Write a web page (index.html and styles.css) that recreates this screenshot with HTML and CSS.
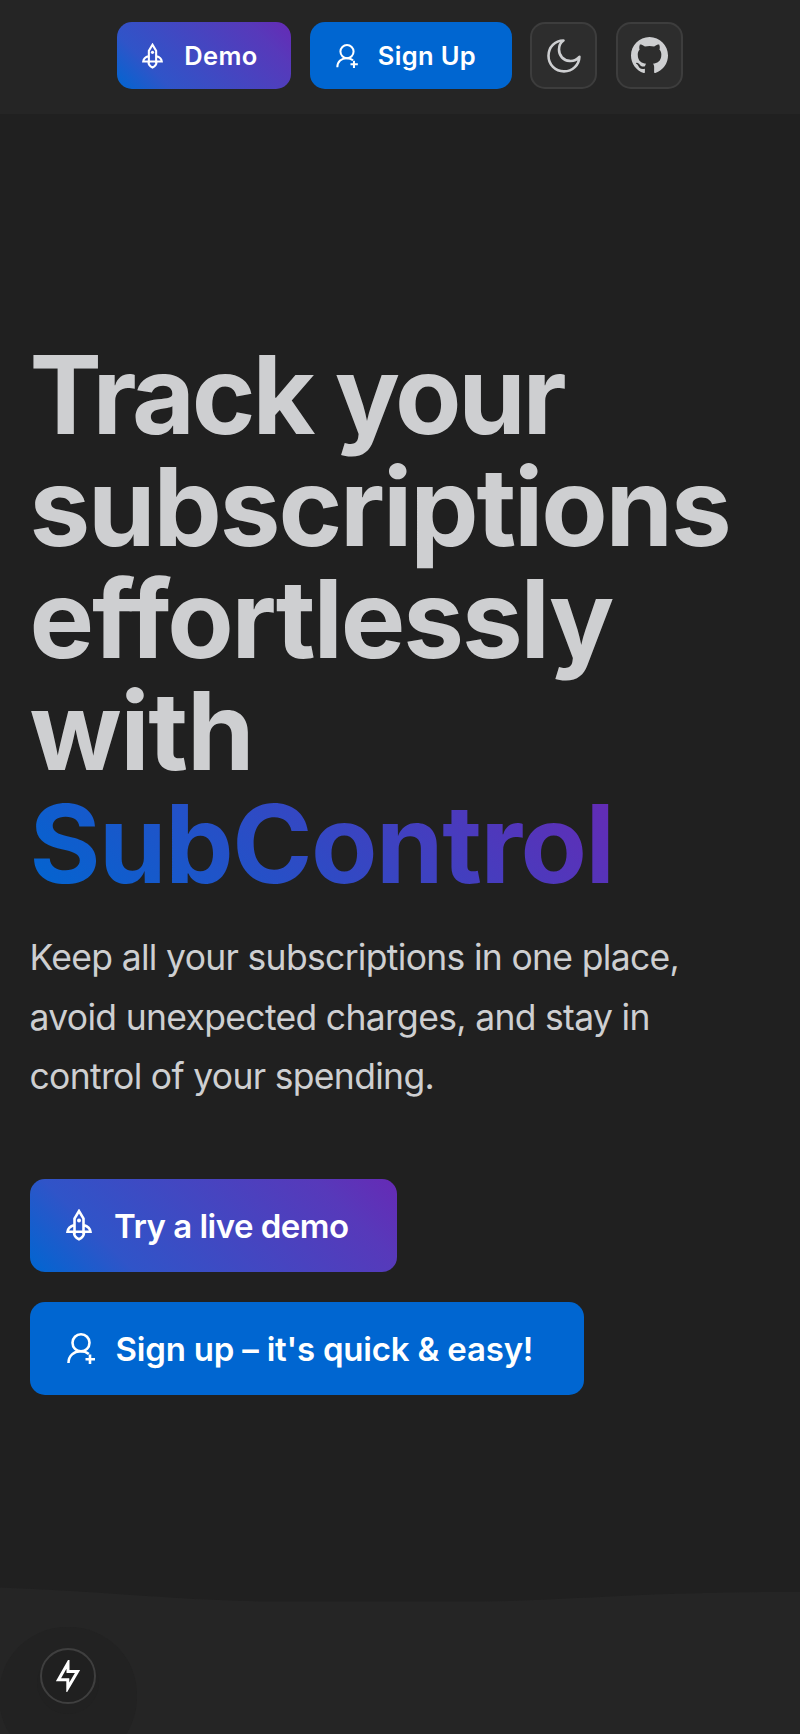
FILE: index.html
```html
<!DOCTYPE html>
<html lang="en">
<head>
<meta charset="utf-8">
<title>SubControl</title>
<link rel="stylesheet" href="styles.css">
</head>
<body>
<svg class="defs" aria-hidden="true">
  <symbol id="rocket" viewBox="0 0 26 32"><path d="M8.500 25V9.500L13 2L17.500 9.500V25M8.500 16Q2 18 1.500 22.800H24.500Q24 18 17.500 16M8 23.500Q8 28 13 30.300Q18 28 18 23.500" /><circle class="dot" cx="13" cy="11.500" r="2"/></symbol>
  <symbol id="user" viewBox="0 0 28 31"><circle cx="14" cy="9.800" r="8.500"/><path d="M1.500 30C1.500 22.500 7 18.300 13.500 18.300Q18.500 18.300 21.800 21M23 21.500V31M18.500 26.300H28"/></symbol>
</svg>
<header class="topbar">
  <a class="btn btn-small gradient demo"><svg class="icon rocket"><use href="#rocket"/></svg><span>Demo</span></a>
  <a class="btn btn-small signup"><svg class="icon user"><use href="#user"/></svg><span>Sign Up</span></a>
  <a class="square"><svg class="moon" viewBox="0 0 34 34"><path d="M16.500 1.500C8 1.500 1.500 8 1.500 16.800C1.500 25.700 8.200 32.400 17 32.400C25.500 32.400 32.200 26 32.400 17.800C29.500 21.200 26 22.200 22.500 21.900C16.500 21.500 12 17 12 10.500C12 6.500 13.500 3.500 16.500 1.500Z"/></svg></a>
  <a class="square"><svg class="github" viewBox="0 0 16 16"><path fill-rule="evenodd" d="M8 0C3.580 0 0 3.580 0 8c0 3.540 2.290 6.530 5.470 7.590.4.070.55-.17.55-.38 0-.19-.01-.82-.01-1.490-2.010.37-2.530-.49-2.690-.94-.09-.23-.48-.94-.82-1.130-.28-.15-.68-.52-.01-.53.63-.01 1.080.58 1.230.82.72 1.210 1.870.87 2.330.66.070-.52.28-.87.51-1.070-1.780-.2-3.640-.89-3.640-3.950 0-.87.31-1.590.82-2.150-.08-.2-.36-1.020.08-2.120 0 0 .67-.21 2.200.82.64-.18 1.320-.27 2-.27s1.360.09 2 .27c1.530-1.040 2.200-.82 2.200-.82.44 1.100.16 1.920.08 2.120.51.56.82 1.270.82 2.150 0 3.070-1.870 3.750-3.650 3.950.29.25.54.73.54 1.480 0 1.070-.01 1.930-.01 2.200 0 .21.15.46.55.38A8.010 8.010 0 0 0 16 8c0-4.420-3.580-8-8-8z"/></svg></a>
</header>
<main class="hero">
  <h1 class="title">
    <span class="line l1">Track your</span>
    <span class="line l2">subscriptions</span>
    <span class="line l3">effortlessly</span>
    <span class="line l4">with</span>
    <span class="line l5 brand">SubControl</span>
  </h1>
  <p class="lead"><span class="line">Keep all your subscriptions in one place,</span><span class="line">avoid unexpected charges, and stay in</span><span class="line">control of your spending.</span></p>
  <div class="actions">
    <a class="btn btn-large gradient try"><svg class="icon rocket"><use href="#rocket"/></svg><span>Try a live demo</span></a>
    <a class="btn btn-large join"><svg class="icon user"><use href="#user"/></svg><span>Sign up – it's quick &amp; easy!</span></a>
  </div>
</main>
<footer class="bottom">
  <svg class="wave" viewBox="0 0 800 147" preserveAspectRatio="none"><path d="M0 .5C100 4 190 14.500 280 14.500H480C570 13.500 650 4.500 800 5V147H0Z"/></svg>
  <a class="fab"><svg class="bolt" viewBox="0 0 24 32"><path d="M12 3L2.500 19.700H11.800V28L21.500 11.500H12Z"/></svg></a>
</footer>
</body>
</html>
```

FILE: styles.css
```css
* { box-sizing: border-box; }
body { margin: 0; height: 1734px; overflow: hidden; display: flex; flex-direction: column; background: #202020; color: #cecfd1; font-family: Inter, "Liberation Sans", sans-serif; }
.defs { position: absolute; width: 0; height: 0; }
.topbar { height: 114px; flex: none; padding-top: 22px; display: flex; justify-content: center; align-items: flex-start; gap: 18.5px; background: #252525; }
.btn { display: flex; align-items: center; flex: none; background: #0066d1; color: #fff; font-weight: 600; white-space: nowrap; border-radius: 15px; }
.gradient { background: linear-gradient(45deg, #0066d1, #3054c8 23%, #5739ba 82%, #662ab5); }
.icon { fill: none; stroke: #fff; stroke-width: 2.600; flex: none; }
.dot { fill: #fff; stroke: none; }
.btn-small { height: 67px; font-size: 25.500px; letter-spacing: .35px; }
.demo { width: 174px; padding-left: 25px; }
.signup { width: 202px; padding-left: 26px; }
.btn-small .rocket { width: 21px; height: 26px; margin-right: 21px; }
.btn-small .user { width: 22px; height: 24px; margin-right: 20px; }
.square { width: 67px; height: 67px; border: 2px solid #3d3d3d; border-radius: 15px; background: #2d2d2d; display: flex; align-items: center; justify-content: center; }
.moon { width: 34px; height: 34px; fill: none; stroke: #cecfd1; stroke-width: 2.600; stroke-linejoin: round; }
.github { width: 37px; height: 37px; fill: #cecfd1; }
.hero { flex: none; height: 1473px; padding: 225px 29.500px 0; }
.title { margin: 0; font-size: 108.500px; line-height: 112px; font-weight: 700; }
.line { display: block; width: max-content; white-space: nowrap; }
.l1 { letter-spacing: -3.200px; }
.l2 { letter-spacing: -2.150px; }
.l3 { letter-spacing: -2.150px; }
.l4 { letter-spacing: -1.400px; }
.l5 { letter-spacing: -1.450px; padding-top: 1px; }
.brand { background: linear-gradient(45deg, #0066d1, #662ab5); background-clip: text; -webkit-background-clip: text; color: transparent; }
.lead { margin: 28px 0 0; font-size: 35.500px; line-height: 59.500px; letter-spacing: -.68px; }
.actions { margin-top: 72px; display: flex; flex-direction: column; align-items: flex-start; gap: 30px; }
.btn-large { height: 93px; font-size: 33px; }
.btn-large span { padding-top: 2px; }
.try { width: 367.500px; padding-left: 36px; letter-spacing: -.52px; }
.join { width: 554.500px; padding-left: 37px; letter-spacing: -.2px; }
.btn-large .rocket { width: 26px; height: 32px; margin-right: 22.500px; }
.btn-large .user { width: 28px; height: 31px; margin-right: 21px; }
.bottom { position: relative; height: 147px; flex: none; overflow: hidden; }
.wave { display: block; width: 100%; height: 147px; fill: #252525; }
.fab { position: absolute; left: 40px; top: 61px; width: 56px; height: 56px; border-radius: 50%; border: 2px solid #3f3f3f; background: #202020; box-shadow: 0 7px 0 3px #212121, 0 20px 0 41px #222; display: flex; align-items: center; justify-content: center; }
.bolt { width: 24px; height: 32px; fill: none; stroke: #fff; stroke-width: 3; }
```
